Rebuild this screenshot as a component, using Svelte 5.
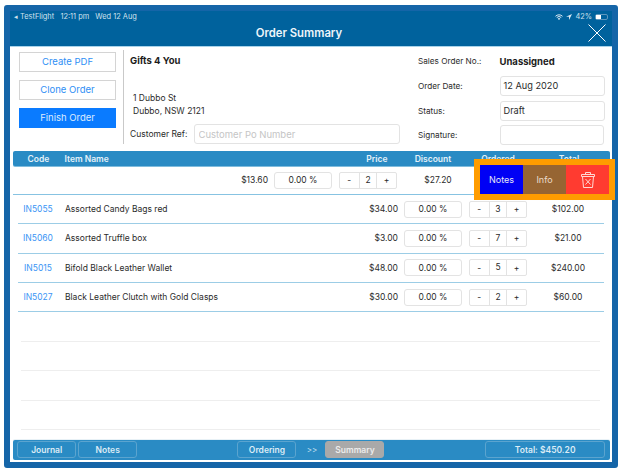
<script>
  const rows = [
    { code: 'IN5055', name: 'Assorted Candy Bags red', price: '$34.00', qty: 3, total: '$102.00' },
    { code: 'IN5060', name: 'Assorted Truffle box', price: '$3.00', qty: 7, total: '$21.00' },
    { code: 'IN5015', name: 'Bifold Black Leather Wallet', price: '$48.00', qty: 5, total: '$240.00' },
    { code: 'IN5027', name: 'Black Leather Clutch with Gold Clasps', price: '$30.00', qty: 2, total: '$60.00' }
  ];
</script>

<div class="frame">
  <header class="top">
    <div class="status">
      <span>◂ TestFlight&nbsp;&nbsp; 12:11 pm&nbsp;&nbsp; Wed 12 Aug</span>
      <span class="sys">
        <svg width="8" height="6" viewBox="0 0 16 12"><path d="M1 4.500a10 10 0 0 1 14 0M3.500 7a6.500 6.500 0 0 1 9 0" fill="none" stroke="#dce9f2" stroke-width="2"/><path d="M8 12l-2.500-2.500a3.500 3.500 0 0 1 5 0z" fill="#dce9f2"/></svg>
        <svg width="6" height="6" viewBox="0 0 12 12"><path d="M12 0L0 5.500h6V12z" fill="#dce9f2"/></svg>
        <span>42%</span>
        <span class="battery"><span></span></span>
      </span>
    </div>
    <div class="title-row">
      <h1>Order Summary</h1>
      <svg class="close" width="18" height="18" viewBox="0 0 18 18"><path d="M0.500 0.500L17.500 17.500M17.500 0.500L0.500 17.500" stroke="#fff" stroke-width="1" fill="none"/></svg>
    </div>
  </header>

  <main class="body">
    <section class="summary">
      <div class="actions">
        <button class="act">Create PDF</button>
        <button class="act">Clone Order</button>
        <button class="act primary">Finish Order</button>
      </div>
      <div class="customer">
        <strong class="cust-name">Gifts 4 You</strong>
        <div class="address">
          <div>1 Dubbo St</div>
          <div>Dubbo, NSW 2121</div>
        </div>
        <div class="ref">
          <label for="ref">Customer Ref:</label>
          <input id="ref" placeholder="Customer Po Number" />
        </div>
      </div>
      <div class="meta">
        <span class="lbl">Sales Order No.:</span><strong>Unassigned</strong>
        <span class="lbl">Order Date:</span><div class="box">12 Aug 2020</div>
        <span class="lbl">Status:</span><div class="box">Draft</div>
        <span class="lbl">Signature:</span><div class="box sig"></div>
      </div>
    </section>

    <div class="table-head">
      <span class="c">Code</span>
      <span>Item Name</span>
      <span class="price-h">Price</span>
      <span class="c">Discount</span>
      <span class="c">Ordered</span>
      <span class="c">Total</span>
    </div>

    <div class="swiped">
      <div class="row shifted">
        <span></span><span></span>
        <span class="price">$13.60</span>
        <div class="disc">0.00 %</div>
        <div class="stepper"><span>-</span><span>2</span><span>+</span></div>
        <span class="c">$27.20</span>
      </div>
    </div>

    <div class="lines">
      {#each rows as r}
        <div class="row">
          <span class="code">{r.code}</span>
          <span class="name">{r.name}</span>
          <span class="price">{r.price}</span>
          <div class="disc">0.00 %</div>
          <div class="stepper"><span>-</span><span>{r.qty}</span><span>+</span></div>
          <span class="c">{r.total}</span>
        </div>
      {/each}
      {#each [0, 1, 2, 3] as _}
        <div class="blank"></div>
      {/each}
    </div>

    <footer class="foot">
      <button class="tab">Journal</button>
      <button class="tab">Notes</button>
      <button class="tab ordering">Ordering</button>
      <span class="chev">&gt;&gt;</span>
      <button class="tab active">Summary</button>
      <button class="tab totalbtn">Total: $450.20</button>
    </footer>
  </main>

  <div class="swipe-actions">
    <button class="sw notes">Notes</button>
    <button class="sw info">Info</button>
    <button class="sw del" aria-label="Delete">
      <svg width="14" height="16" viewBox="0 0 14 16" fill="none" stroke="#ffd9d4" stroke-width="1">
        <path d="M0.500 2.500h13v2h-13zM1.500 4.500l1 11h9l1-11M4.500 2.500V0.500h5v2M4.500 7l5 5.500M9.500 7l-5 5.500" />
      </svg>
    </button>
  </div>
</div>

<style>
  :global(body) {
    margin: 0;
    background: #fff;
  }
  :global(#app) {
    font-family: Inter, "Open Sans", sans-serif;
    font-size: 8.5px;
    color: #2b2b2b;
  }
  button {
    font: inherit;
    padding: 0;
    cursor: pointer;
  }
  .frame {
    position: relative;
    box-sizing: border-box;
    width: 614px;
    height: 463px;
    margin: 5px 0 0 4px;
    border: 6px solid #1565a8;
    border-radius: 3px;
    display: flex;
    flex-direction: column;
    background: #fff;
  }
  .top {
    height: 35px;
    flex: none;
    background: #00629d;
    color: #fff;
    border-bottom: 1px solid #a9d3ea;
  }
  .status {
    display: flex;
    justify-content: space-between;
    align-items: center;
    height: 11px;
    padding: 0 4px;
    font-size: 7.4px;
    color: #cfe1ee;
  }
  .sys {
    display: flex;
    align-items: center;
    gap: 3px;
  }
  .battery {
    display: block;
    width: 13px;
    height: 6px;
    border: 1px solid #5f97bd;
    border-radius: 2px;
    box-sizing: border-box;
  }
  .battery span {
    display: block;
    width: 5px;
    height: 100%;
    background: #fff;
  }
  .title-row {
    position: relative;
    display: flex;
    justify-content: center;
    padding: 5px 24px 0 0;
  }
  h1 {
    margin: 0;
    font-size: 11.3px;
    line-height: 13px;
    font-weight: 600;
    color: #eef5fa;
  }
  .close {
    position: absolute;
    right: 6px;
    top: 2px;
  }
  .body {
    flex: 1;
    min-height: 0;
    display: flex;
    flex-direction: column;
    padding: 0 2.500px 2.500px;
  }
  .summary {
    height: 104px;
    flex: none;
    display: flex;
  }
  .actions {
    width: 97px;
    margin-left: 6.500px;
    padding-top: 4.500px;
    display: flex;
    flex-direction: column;
    gap: 7.500px;
    flex: none;
  }
  .act {
    height: 20.500px;
    box-sizing: border-box;
    background: #fff;
    border: 1px solid #d4d4d4;
    color: #2f8ff5;
    font-size: 9.500px;
    padding-bottom: 1px;
  }
  .act.primary {
    background: #0a7bff;
    border-color: #0a7bff;
    color: #dcebff;
  }
  .customer {
    margin: 3px 0 7px 7px;
    border-left: 1px solid #c9c9c9;
    padding-left: 6px;
    width: 270px;
    flex: none;
    display: flex;
    flex-direction: column;
  }
  .cust-name {
    font-size: 9.500px;
    font-weight: 700;
    color: #1c1c1c;
    margin-top: 5px;
    line-height: 11px;
  }
  .address {
    margin: 26px 0 0 3px;
    line-height: 13px;
  }
  .ref {
    display: flex;
    align-items: center;
    margin-top: auto;
    gap: 6.500px;
  }
  .ref label {
    width: 57px;
    flex: none;
    white-space: nowrap;
  }
  .ref input {
    width: 206px;
    height: 20px;
    box-sizing: border-box;
    border: 1px solid #e3e3e3;
    border-radius: 3px;
    padding: 0 4px;
    font: inherit;
    font-size: 9.500px;
    outline: none;
  }
  .ref input::placeholder {
    color: #c5c5c5;
  }
  .meta {
    margin-left: 18px;
    width: 187px;
    padding-top: 4px;
    display: grid;
    grid-template-columns: 81.500px 105px;
    grid-template-rows: 20px 20px 20px 20px;
    row-gap: 4.800px;
    align-items: center;
    align-content: start;
  }
  .lbl {
    font-size: 8.200px;
  }
  .meta strong {
    font-size: 9.500px;
    color: #1c1c1c;
  }
  .box {
    height: 20px;
    box-sizing: border-box;
    border: 1px solid #e3e3e3;
    border-radius: 3px;
    display: flex;
    align-items: center;
    padding-left: 3px;
    font-size: 9.200px;
  }
  .sig {
    width: 104px;
  }
  .table-head {
    display: grid;
    grid-template-columns: 52px 300px 34px 69px 61px 81px;
    align-items: center;
    height: 15px;
    flex: none;
    background: #2a8bc4;
    border-radius: 2px;
    color: #e4f1f9;
    font-weight: 600;
    box-shadow: 0 1px 0 #7fbcdd;
  }
  .c {
    text-align: center;
  }
  .price-h {
    text-align: right;
    margin-right: 11px;
  }
  .swiped {
    height: 28px;
    flex: none;
    overflow: hidden;
    border-bottom: 1px solid #87c3e2;
  }
  .row {
    display: grid;
    grid-template-columns: 40px 294px 46px 64px 65px 82px;
    align-items: center;
    height: 29.330px;
    box-sizing: border-box;
    border-bottom: 1px solid #9ccde6;
    margin: 0 5.500px;
  }
  .row.shifted {
    height: 28px;
    border: 0;
    margin: 0 0 0 -124.500px;
  }
  .disc {
    margin-left: 6px;
    height: 17px;
    box-sizing: border-box;
    border: 1px solid #e3e3e3;
    border-radius: 3px;
    display: flex;
    align-items: center;
    justify-content: center;
  }
  .stepper {
    margin-left: 7px;
    height: 17px;
    box-sizing: border-box;
    border: 1px solid #e3e3e3;
    border-radius: 2px;
    display: grid;
    grid-template-columns: 1fr 1fr 1fr;
    align-items: center;
    text-align: center;
  }
  .stepper span:nth-child(2) {
    border: solid #e3e3e3;
    border-width: 0 1px;
    line-height: 15px;
  }
  .price {
    text-align: right;
  }
  .code {
    color: #3b95f5;
    text-align: center;
  }
  .name {
    white-space: nowrap;
    padding-left: 7px;
  }
  .lines {
    flex: 1;
    min-height: 0;
    overflow: hidden;
  }
  .blank {
    height: 29.500px;
    box-sizing: border-box;
    border-bottom: 1px solid #eeeeee;
    margin: 0 9.500px 0 8.500px;
  }
  .foot {
    height: 20px;
    flex: none;
    background: #2a8bc4;
    border-radius: 2px;
    display: flex;
    align-items: center;
    padding-left: 4.700px;
    box-shadow: 0 -1px 0 #e8f1f6;
  }
  .tab {
    width: 59px;
    height: 17px;
    box-sizing: border-box;
    background: #2a8bc4;
    border: 1px solid #5ba4cf;
    border-radius: 3px;
    color: #dcecf6;
    font-weight: 600;
    margin-right: 2px;
  }
  .ordering {
    margin-left: 98.300px;
  }
  .chev {
    color: #cfe4f2;
    width: 27px;
    text-align: center;
    font-size: 8px;
  }
  .active {
    background: #a9a9a9;
    border-color: #a9a9a9;
    color: #ececec;
  }
  .totalbtn {
    width: 120px;
    margin-left: 98.700px;
  }
  .swipe-actions {
    position: absolute;
    left: 464px;
    top: 148px;
    display: flex;
    background: #ff9c00;
    padding: 6px;
    z-index: 2;
  }
  .sw {
    width: 43px;
    height: 29px;
    border: 0;
    color: #e8e8f5;
    font-size: 9px;
    display: flex;
    align-items: center;
    justify-content: center;
  }
  .notes { background: #0000f5; }
  .info { background: #966533; color: #ecdcca; }
  .del { background: #ff3b30; }
</style>
